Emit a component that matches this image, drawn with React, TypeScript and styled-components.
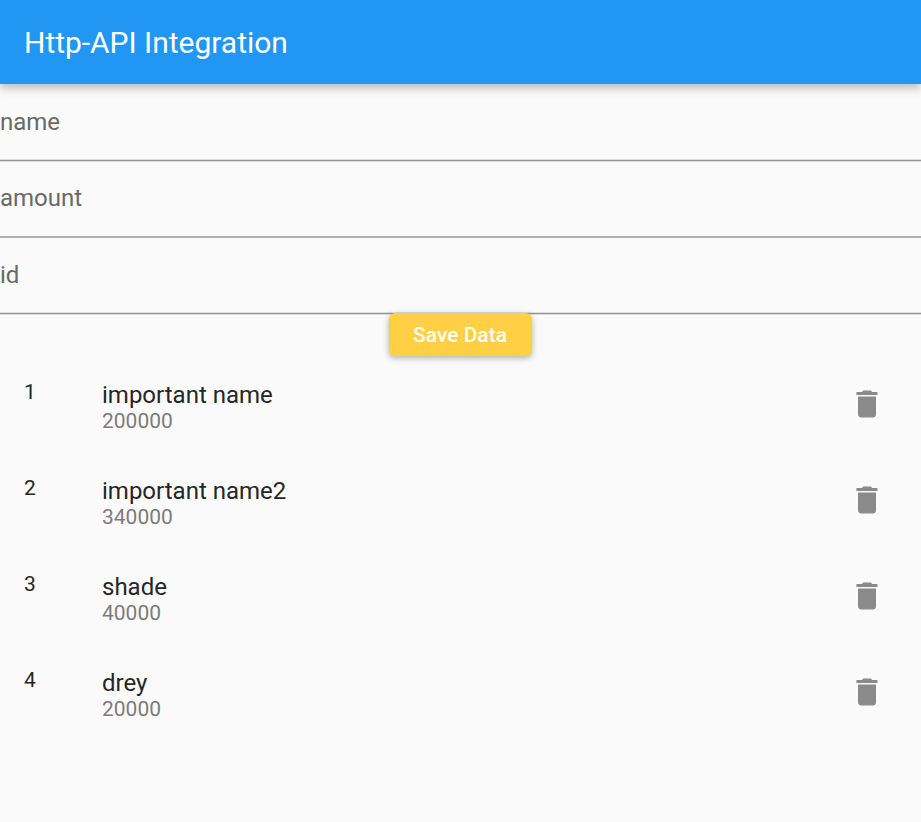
import React from "react";
import styled, { createGlobalStyle } from "styled-components";

const GlobalStyle = createGlobalStyle`
  * { box-sizing: border-box; }
  body { margin: 0; background: #fafafa; font-family: Roboto, sans-serif; }
`;

const Page = styled.div`
  min-height: 822px;
  display: flex;
  flex-direction: column;
`;

const AppBar = styled.header`
  height: 84px;
  padding: 2px 24px 0;
  display: flex;
  align-items: center;
  background: #2196f3;
  box-shadow: 0 4px 9px rgba(0, 0, 0, 0.26);
`;

const Title = styled.h1`
  margin: 0;
  color: #fff;
  font-size: 30px;
  line-height: 36px;
  font-weight: 400;
  letter-spacing: -0.02px;
`;

const Form = styled.form`
  display: flex;
  flex-direction: column;
  align-items: center;
`;

const softLine = "linear-gradient(#dedede 0 1px, #949494 1px 2px, #dedede 2px 3px)";
const thickLine = "linear-gradient(transparent 0 1px, #b0b0b0 1px 3px)";

const Field = styled.input<{ $height: number; $inset: number; $thick?: boolean }>`
  width: 100%;
  height: ${(p) => p.$height}px;
  padding: 0 0 ${(p) => p.$inset}px;
  border: 0;
  border-radius: 0;
  outline: 0;
  background: ${(p) => (p.$thick ? thickLine : softLine)} bottom / 100% 3px no-repeat;
  color: #212121;
  font: 400 24px/28px Roboto, sans-serif;
  &::placeholder { color: #696969; opacity: 1; }
`;

const SaveButton = styled.button`
  width: 143px;
  height: 42.4px;
  margin-top: -1.6px;
  padding: 0 1px 0 0;
  border: 0;
  border-radius: 6px;
  background: #ffd043;
  color: #fffdf4;
  font: 500 21px/24px Roboto, sans-serif;
  box-shadow: 0 2px 6px rgba(0, 0, 0, 0.3);
`;

const List = styled.ul`
  margin: 0.2px 0 0;
  padding: 0;
  list-style: none;
`;

const Row = styled.li`
  height: 96px;
  padding: 24px 42px 0 24px;
  display: grid;
  grid-template-columns: 78px 1fr auto;
  align-items: start;
`;

const Index = styled.span`
  font-size: 21px;
  line-height: 24px;
  color: #262626;
`;

const Name = styled.div`
  font-size: 24px;
  line-height: 28px;
  padding-top: 1px;
  color: #262626;
`;

const Amount = styled.div`
  font-size: 21px;
  line-height: 24px;
  color: #7c7c7c;
`;

const DeleteButton = styled.button`
  width: 24px;
  height: 36px;
  padding: 0;
  border: 0;
  background: none;
  display: flex;
  justify-content: center;
  margin-top: 6px;
  color: #8a8a8a;
  svg { flex: none; }
`;

const records = [
  { name: "important name", amount: "200000" },
  { name: "important name2", amount: "340000" },
  { name: "shade", amount: "40000" },
  { name: "drey", amount: "20000" },
];

const TrashIcon = () => (
  <svg width="36" height="36" viewBox="0 0 24 24" fill="currentColor" aria-hidden="true">
    <path d="M6 19c0 1.1.9 2 2 2h8c1.1 0 2-.9 2-2V7H6v12zM19 4h-3.5l-1-1h-5l-1 1H5v2h14V4z" />
  </svg>
);

export default function App() {
  return (
    <Page>
      <GlobalStyle />
      <AppBar>
        <Title>Http-API Integration</Title>
      </AppBar>
      <Form>
        <Field placeholder="name" $height={78} $inset={3} />
        <Field placeholder="amount" $height={76} $inset={4} $thick />
        <Field placeholder="id" $height={77} $inset={4} />
        <SaveButton type="button">Save Data</SaveButton>
      </Form>
      <List>
        {records.map((record, i) => (
          <Row key={record.name}>
            <Index>{i + 1}</Index>
            <div>
              <Name>{record.name}</Name>
              <Amount>{record.amount}</Amount>
            </div>
            <DeleteButton aria-label="Delete">
              <TrashIcon />
            </DeleteButton>
          </Row>
        ))}
      </List>
    </Page>
  );
}
